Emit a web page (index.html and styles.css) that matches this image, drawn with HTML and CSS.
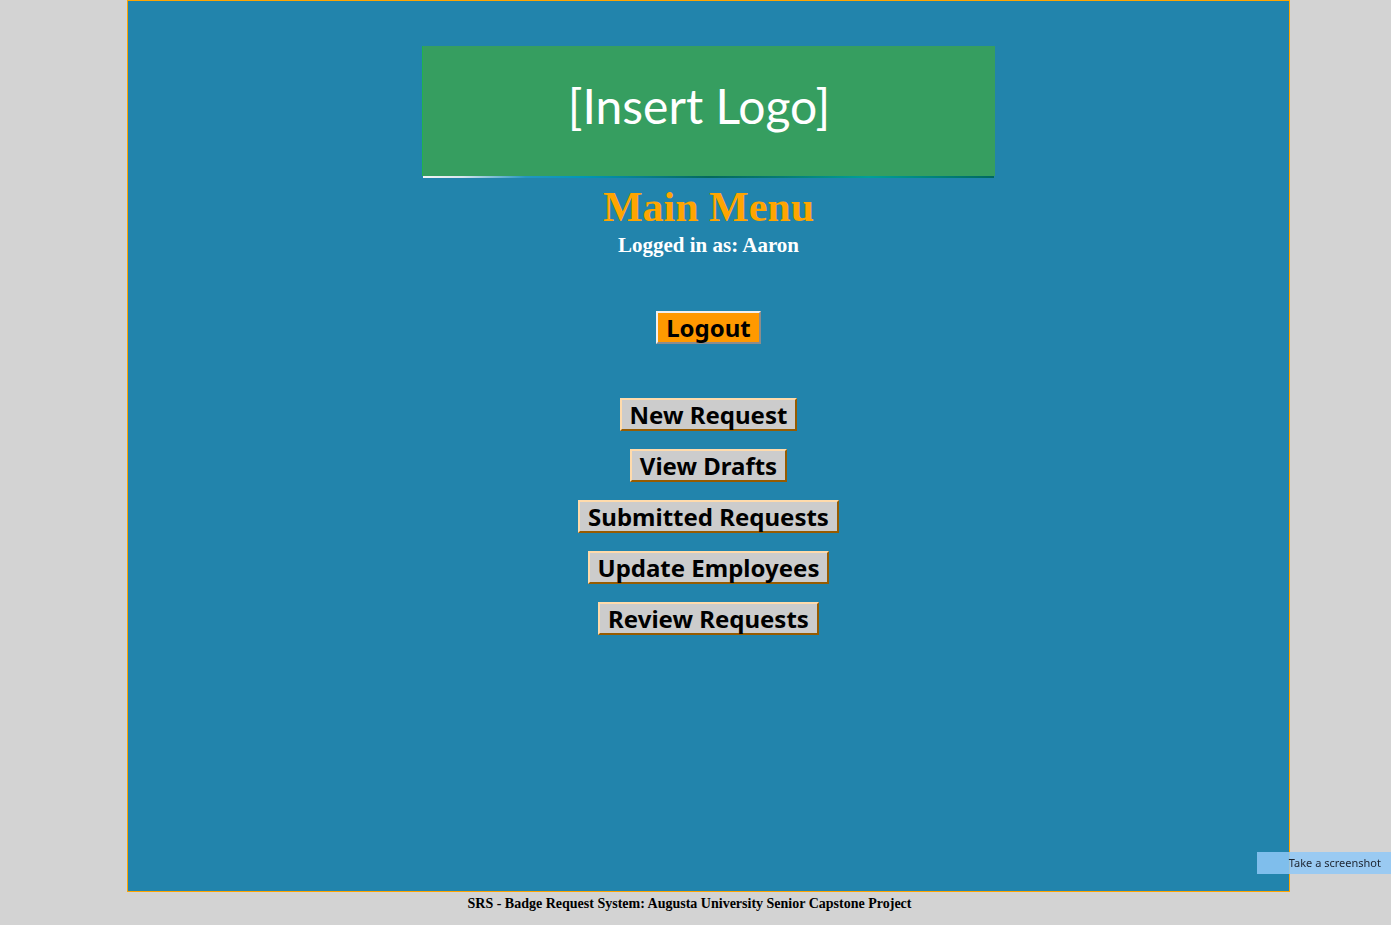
FILE: index.html
```html
<!DOCTYPE html>
<html lang="en">
<head>
  <meta charset="utf-8">
  <meta name="viewport" content="width=device-width, initial-scale=1">
  <title>Main Menu</title>
  <link rel="stylesheet" href="styles.css">
</head>
<body>
  <main class="panel">
    <div class="logo"><span class="logo-text">[Insert Logo]</span></div>
    <div class="logo-rule"></div>
    <h1 class="title">Main Menu</h1>
    <p class="user">Logged in as: Aaron</p>
    <button type="button" class="btn btn-logout">Logout</button>
    <nav class="menu" aria-label="Main menu">
      <button type="button" class="btn">New Request</button>
      <button type="button" class="btn">View Drafts</button>
      <button type="button" class="btn">Submitted Requests</button>
      <button type="button" class="btn">Update Employees</button>
      <button type="button" class="btn">Review Requests</button>
    </nav>
  </main>
  <footer class="footer">SRS - Badge Request System: Augusta University Senior Capstone Project</footer>
  <button type="button" class="shot">Take a screenshot</button>
</body>
</html>
```
FILE: styles.css
```css
* {
  box-sizing: border-box;
}

body {
  display: flex;
  flex-direction: column;
  min-height: 100vh;
  margin: 0;
  background: #d3d3d3;
  font-family: "Liberation Serif", "Times New Roman", serif;
}

.panel {
  display: flex;
  flex: 1;
  flex-direction: column;
  align-items: center;
  margin: 0 101px 0 127px;
  padding: 45px 16px;
  border: 1px solid #ffa500;
  background: #2284ac;
}

.logo {
  width: 100%;
  max-width: 573px;
  padding: 24px 20px 34px 0;
  background: #369e60;
  border-left: 1px solid #22b14c;
  text-align: center;
}

.logo-text {
  display: block;
  color: #fff;
  font-family: Lato, sans-serif;
  font-size: 48px;
  line-height: 72px;
}

.logo-rule {
  width: 100%;
  max-width: 571px;
  height: 2px;
  background: linear-gradient(90deg, #f4f4f4 0%, #d8e4ee 7%, #2496c0 18%, #0097b8 28%, #078091 38%, #04695c 50%, #057a73 62%, #00a09a 78%, #00685f 100%);
}

.title {
  margin: 4px 0 0;
  color: #ffa500;
  font-size: 42px;
  line-height: 50px;
}

.user {
  margin: 0;
  color: #fff;
  font-size: 21px;
  font-weight: bold;
  line-height: 26px;
}

.btn {
  padding: 0 8px;
  border: 2px solid;
  border-color: #ffdbac #965b00 #965b00 #ffdbac;
  background: #ccc;
  color: #000;
  font-family: "Noto Sans", sans-serif;
  font-size: 24px;
  font-weight: bold;
  line-height: 29px;
}

.btn-logout {
  margin-top: 53px;
  border-color: #f0f0f0 #8c8c8c #8c8c8c #f0f0f0;
  background: #ff9900;
}

.menu {
  display: flex;
  flex-direction: column;
  align-items: center;
  gap: 18px;
  margin-top: 54px;
}

.footer {
  padding: 3px 12px 12px 0;
  font-size: 14px;
  font-weight: bold;
  line-height: 18px;
  text-align: center;
}

.shot {
  position: fixed;
  right: 0;
  bottom: 51px;
  padding: 0 10px 0 32px;
  border: 0;
  background: rgba(143, 200, 247, 0.85);
  color: #1c2430;
  font-family: "Noto Sans", sans-serif;
  font-size: 11px;
  line-height: 22px;
}
```
